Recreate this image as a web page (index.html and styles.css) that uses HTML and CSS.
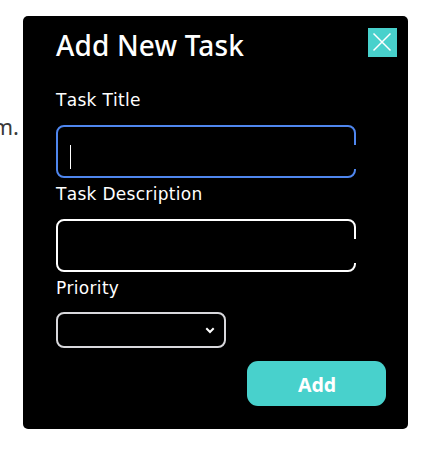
FILE: index.html
```html
<!DOCTYPE html>
<html lang="en">
<head>
<meta charset="utf-8">
<title>Add New Task</title>
<link rel="stylesheet" href="styles.css">
</head>
<body>
<p class="page-text">m.</p>
<form class="dialog">
  <header class="dialog-header">
    <h1 class="title">Add New Task</h1>
    <button class="close" type="button" aria-label="Close"><svg viewBox="0 0 29 29" width="29" height="29"><path d="M5.5 5.5 22.5 22.5M22.5 5.5 5.5 22.5" fill="none" stroke="#fff" stroke-width="1.5"/></svg></button>
  </header>
  <div class="group">
    <div class="label">Task Title</div>
    <div class="field focused"><span class="caret"></span><span class="field-end"></span></div>
  </div>
  <div class="group">
    <div class="label">Task Description</div>
    <div class="field"><span class="field-end"></span></div>
  </div>
  <div class="group">
    <div class="label priority-label">Priority</div>
    <div class="select"><svg viewBox="0 0 10 7" width="10" height="7"><path d="M1.3 1.3 5 5 8.7 1.3" fill="none" stroke="#fff" stroke-width="2"/></svg></div>
  </div>
  <button class="add" type="button">Add</button>
</form>
</body>
</html>
```
FILE: styles.css
```css
* { box-sizing: border-box; }
body {
  margin: 0;
  height: 463px;
  padding: 16px 0 0;
  display: flex;
  align-items: flex-start;
  overflow: hidden;
  background: #fff;
}
.page-text {
  flex: 0 0 23px;
  min-width: 0;
  display: flex;
  justify-content: flex-end;
  margin: 95px 0 0;
  padding-right: 4px;
  font: 22px/30px "Noto Sans", sans-serif;
  color: #3a3a3a;
}
.dialog {
  flex: 0 0 385px;
  height: 413px;
  padding: 12px 11px 0 33px;
  display: flex;
  flex-direction: column;
  border-radius: 5px;
  background: #000;
  color: #fff;
}
.dialog-header {
  display: flex;
  justify-content: space-between;
  height: 60px;
}
.title {
  margin: 0;
  font: 500 28px/34px "Noto Sans", sans-serif;
  letter-spacing: 0.15px;
  white-space: nowrap;
}
.close {
  width: 29px;
  height: 29px;
  padding: 0;
  border: 0;
  background: #48d1cc;
}
.close svg { display: block; }
.group { height: 94px; }
.label {
  height: 37px;
  font: 17px/24px "DejaVu Sans", sans-serif;
  font-kerning: none;
  letter-spacing: 0.3px;
  white-space: nowrap;
}
.priority-label { height: 36px; }
.field {
  position: relative;
  width: 300px;
  height: 53px;
  padding: 18px 12px;
  border: 2px solid #fff;
  border-radius: 8px;
}
.focused { border-color: #4f86ee; }
.caret {
  display: block;
  width: 1px;
  height: 24px;
  background: #fff;
}
.field-end {
  position: absolute;
  top: 18px;
  right: -3px;
  width: 5px;
  height: 24px;
  background: #000;
}
.select {
  display: flex;
  align-items: center;
  justify-content: flex-end;
  width: 170px;
  height: 36px;
  padding-right: 9px;
  border: 2px solid #d8d8dc;
  border-radius: 8px;
}
.add {
  align-self: flex-end;
  width: 139px;
  height: 45px;
  margin: -9px 11px 0 0;
  padding: 0 0 0 1px;
  border: 0;
  border-radius: 11px;
  background: #48d1cc;
  color: #fff;
  font: 700 19.5px/47px "Noto Sans", sans-serif;
}
```
